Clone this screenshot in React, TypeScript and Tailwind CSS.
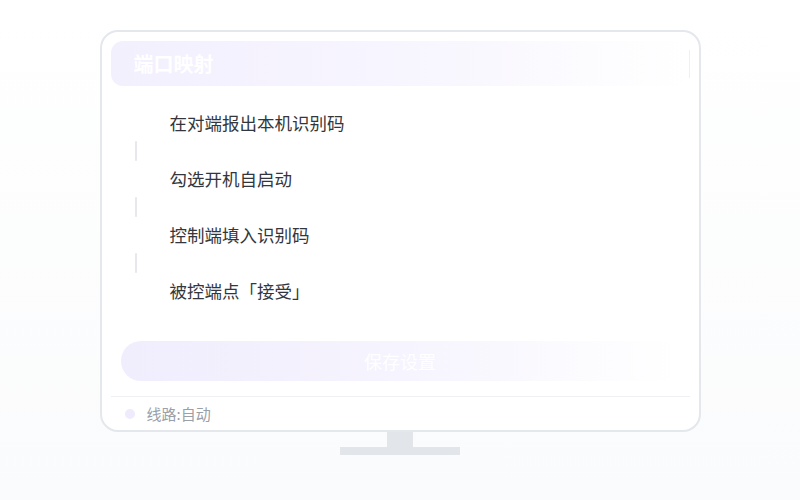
export default function App() {
  const steps = ["在对端报出本机识别码", "勾选开机自启动", "控制端填入识别码", "被控端点「接受」"];
  const font = { fontFamily: '"Noto Sans CJK SC", "Noto Sans", sans-serif' };

  return (
    <div
      className="w-[800px] h-[500px] bg-gradient-to-b from-white to-[#fafbfc] flex flex-col items-center pt-[30px]"
      style={font}
    >
      {/* monitor screen */}
      <div className="w-[601px] h-[402px] border-2 border-[#e4e7ec] rounded-[18px] bg-white px-[9px] pt-[9px] flex flex-col">
        <div className="h-[45px] rounded-[12px] bg-gradient-to-r from-[#f3f0fe] via-[#f7f5fe] to-white flex items-center pl-[23px]">
          <span className="text-[20px] font-semibold text-white leading-none">端口映射</span>
          <div className="ml-auto w-px h-[28px] bg-[#eef0f3]" />
        </div>

        <div className="mt-[19px] mb-[2px] flex flex-col">
          {steps.map((s, i) => (
            <div key={i} className="flex flex-col">
              {i > 0 && (
                <div className="h-[20px] pl-[24px]">
                  <div className="w-[2px] h-full bg-[#e6e8ed] rounded-full" />
                </div>
              )}
              <div className="h-[36px] flex items-center pl-[59px] text-[17.5px] text-[#33373d] leading-none">
                {s}
              </div>
            </div>
          ))}
        </div>

        <div className="mt-[30px] mx-[10px] h-[40px] rounded-full bg-gradient-to-r from-[#f0edfd] via-[#f6f4fe] to-white flex items-center justify-center">
          <span className="text-[18px] text-white leading-none">保存设置</span>
        </div>

        <div className="mt-[15px] h-px bg-[#eef0f3]" />

        <div className="flex-1 flex items-center pl-[14px] gap-[12px]">
          <div className="w-[10px] h-[10px] rounded-full bg-[#efebfd]" />
          <span className="text-[15px] text-[#9aa0a8] leading-none">线路:自动</span>
        </div>
      </div>

      {/* stand */}
      <div className="w-[26px] h-[15px] bg-[#e2e6eb]" />
      <div className="w-[120px] h-[8px] bg-[#e2e6eb]" />
    </div>
  );
}
